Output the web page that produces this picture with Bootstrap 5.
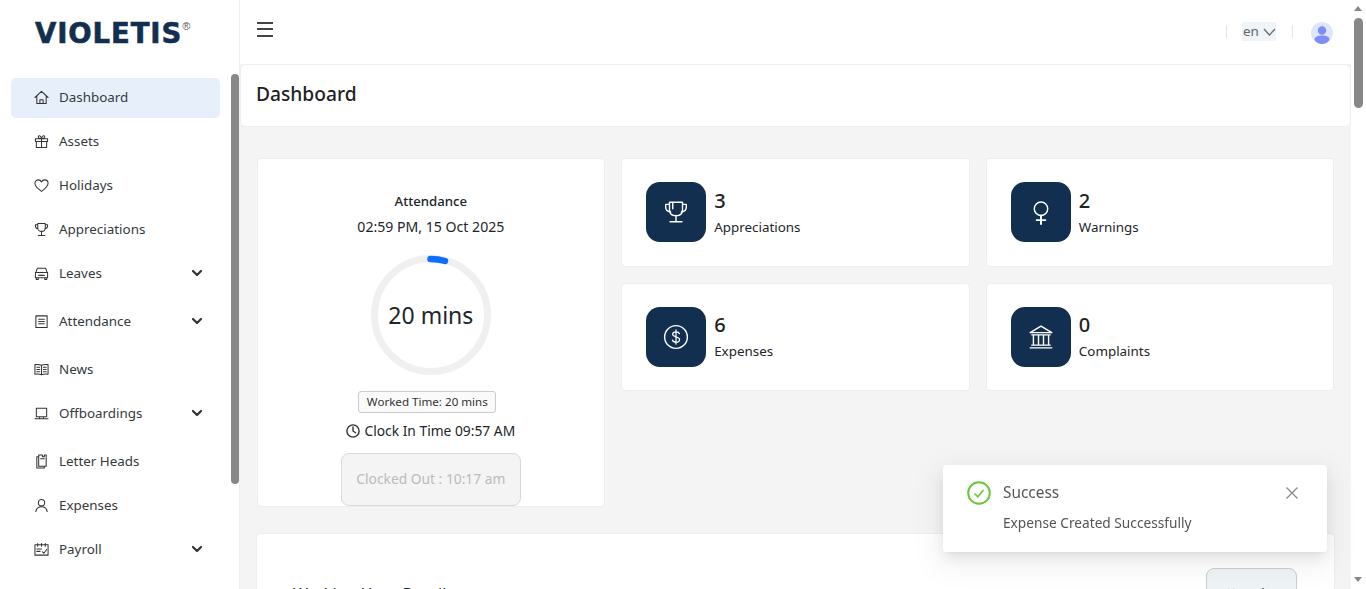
<!DOCTYPE html>
<html lang="en">
<head>
    <meta charset="UTF-8">
    <meta name="viewport" content="width=device-width, initial-scale=1.0">
    <title>Dashboard</title>
    <link href="https://cdn.jsdelivr.net/npm/bootstrap@5.3.0/dist/css/bootstrap.min.css" rel="stylesheet">
    <style>
        html, body {
            height: 100%;
            overflow: hidden;
        }

        body {
            font-family: "Noto Sans", "Open Sans", sans-serif;
            font-size: 13.4px;
            color: #212529;
            background: #fff;
        }

        .app-shell {
            height: 100vh;
        }

        /* sidebar */
        .side-col {
            width: 240px;
            flex: 0 0 240px;
            border-right: 1px solid #f0f0f0;
        }

        .brand-row {
            flex: none;
            height: 74px;
            padding: 18px 0 0 35px;
            white-space: nowrap;
        }

        .brand-name {
            font-family: "DejaVu Sans", sans-serif;
            font-weight: 700;
            font-size: 27.5px;
            line-height: 30px;
            color: #122f4f;
            letter-spacing: 0.9px;
            -webkit-text-stroke: 0.6px #122f4f;
        }

        .brand-reg {
            font-family: "Liberation Sans", sans-serif;
            font-size: 11px;
            color: #555;
            position: relative;
            top: -13px;
        }

        .side-scroll {
            min-height: 0;
        }

        .side-list {
            overflow: hidden;
            padding: 4px 11px 0;
        }

        .side-thumb {
            flex: none;
            width: 8px;
            height: 410px;
            background: #888;
            border-radius: 4px;
        }

        .side-item {
            height: 40px;
            margin-bottom: 4px;
            padding: 0 17px 2px 23px;
            border-radius: 5px;
            color: #343a40;
        }

        .side-item.has-sub {
            margin-bottom: 8px;
        }

        .side-item.current {
            background: #e7f0fa;
        }

        .side-icon {
            width: 15px;
            height: 15px;
            margin-right: 10px;
            fill: none;
            stroke: #333;
            stroke-width: 1.1;
            stroke-linecap: round;
            stroke-linejoin: round;
            flex: none;
        }

        .side-caret {
            width: 12px;
            height: 12px;
            fill: none;
            stroke: #333;
            stroke-width: 2.2;
            stroke-linecap: round;
            stroke-linejoin: round;
        }

        /* main column */
        .main-col {
            overflow: hidden;
            background: #f4f4f4;
            min-width: 0;
        }

        /* page scrollbar, headless browser hides the real one */
        .page-bar {
            flex: 0 0 15px;
            width: 15px;
            background: #fff;
            padding: 6px 3px 7px;
        }

        .page-thumb {
            height: 90px;
            margin-top: 7px;
            background: #888;
            border-radius: 5px;
        }

        .arrow-up, .arrow-down {
            width: 0;
            border-left: 4.5px solid transparent;
            border-right: 4.5px solid transparent;
        }

        .arrow-up {
            border-bottom: 5px solid #888;
        }

        .arrow-down {
            border-top: 5px solid #888;
        }

        .top-strip {
            height: 64px;
            background: #fff;
            padding: 0 18px 6px 17px;
        }

        .burger {
            width: 16px;
            height: 15px;
            border-top: 2px solid #444;
            border-bottom: 2px solid #444;
            position: relative;
        }

        .burger::after {
            content: "";
            position: absolute;
            left: 0;
            right: 0;
            top: 4.5px;
            border-top: 2px solid #444;
        }

        .strip-tools {
            margin-top: 5px;
        }

        .strip-sep {
            width: 1px;
            height: 13px;
            background: #e4e4e4;
        }

        .lang-pick {
            background: #eef4f7;
            height: 19px;
            width: 34px;
            margin: 0 16px 0 15px;
            padding-left: 1px;
            color: #666;
            line-height: 19px;
        }

        .avatar-round {
            width: 22px;
            height: 22px;
            margin: 3px 0 0 18px;
        }

        .page-head {
            height: 63px;
            background: #fff;
            border: 1px solid #eee;
            border-radius: 6px;
            padding: 0 0 2px 15px;
            font-size: 19.2px;
            font-weight: 500;
            color: #222;
        }

        .page-body {
            padding: 31px 16.5px 40px 16.5px;
        }

        .panel-box {
            background: #fff;
            border: 1px solid #eeeeee;
            border-radius: 4px;
        }

        .attend-box {
            height: 348.5px;
            padding-top: 32px;
            text-align: center;
        }

        .attend-title {
            font-size: 13.2px;
            font-weight: 500;
            line-height: 20px;
            margin-bottom: 6px;
        }

        .attend-date {
            font-size: 14.1px;
            line-height: 20px;
        }

        .ring-wrap {
            width: 120px;
            height: 120px;
            margin: 18px auto 16px;
        }

        .ring-label {
            font-size: 23px;
            white-space: nowrap;
        }

        .worked-tag {
            display: inline-block;
            border: 1px solid #ccc;
            border-radius: 3px;
            background: #fafafa;
            font-size: 11.6px;
            line-height: 20px;
            padding: 0 7.5px;
            margin-right: 7px;
            color: #333;
        }

        .clock-line {
            font-size: 13.8px;
            line-height: 20px;
            margin: 8px 0 12px;
        }

        .clocked-btn {
            display: block;
            width: 180px;
            height: 53px;
            margin: 0 auto;
            background: #f4f4f4;
            border: 1px solid #d9d9d9;
            border-radius: 8px;
            color: #bbb;
            font-size: 13.8px;
            font-family: inherit;
        }

        .stat-box {
            height: 108.5px;
            padding: 0 24px;
        }

        .stat-tile {
            width: 60px;
            height: 60px;
            border-radius: 14px;
            background: #122f4f;
            flex: none;
            margin-right: 8px;
        }

        .stat-tile svg {
            width: 26px;
            height: 26px;
            fill: none;
            stroke: #fff;
            stroke-width: 1.3;
            stroke-linecap: round;
            stroke-linejoin: round;
        }

        .stat-text {
            padding-top: 3px;
        }

        .stat-num {
            font-size: 20px;
            font-weight: 500;
            line-height: 24px;
            margin-bottom: 2px;
            color: #222;
        }

        .stat-label {
            line-height: 24px;
        }

        .hours-box {
            margin: 26px -0.5px 0 -0.5px;
            height: 3000px;
            padding: 34px 37px 34px 36px;
        }

        .hours-title {
            font-size: 16px;
            line-height: 24px;
            margin-top: 14px;
        }

        .range-btn {
            width: 91px;
            height: 52px;
            background: #eef3f6;
            border: 1px solid #ccc;
            border-radius: 8px;
            color: #333;
            font-family: inherit;
            font-size: 13.4px;
        }

        /* toast */
        .toast-note {
            position: fixed;
            left: 943px;
            top: 465px;
            width: 384px;
            height: 87px;
            background: rgba(255, 255, 255, 0.95);
            border-radius: 4px;
            box-shadow: 0 6px 16px rgba(0, 0, 0, 0.08), 0 3px 6px -4px rgba(0, 0, 0, 0.12), 0 9px 28px 8px rgba(0, 0, 0, 0.05);
            padding: 16px 29px 16px 24px;
            z-index: 20;
            color: #555;
        }

        .toast-title {
            font-size: 15.4px;
            line-height: 24px;
        }

        .toast-text {
            font-size: 13.7px;
            line-height: 22px;
            margin: 7px 0 0 36px;
        }
    </style>
</head>

<body>
    <div class="app-shell d-flex">
        <!-- sidebar -->
        <aside class="side-col d-flex flex-column">
            <div class="brand-row"><span class="brand-name">VIOLETIS</span><span class="brand-reg">®</span></div>
            <div class="side-scroll d-flex flex-grow-1">
                <div class="side-list flex-grow-1">
                    <div class="side-item current d-flex align-items-center">
                        <svg class="side-icon" viewBox="0 0 16 16"><path d="M1 8 8 1.5 15 8M3 6.5V14.5H13V6.5M6.3 14.5V10.5H9.7V14.5"/></svg>Dashboard
                    </div>
                    <div class="side-item d-flex align-items-center">
                        <svg class="side-icon" viewBox="0 0 16 16"><path d="M1.5 5H14.5V8H1.5ZM2.5 8V14.5H13.5V8M8 5V14.5M8 5C6 5 4.2 4.3 4.6 2.6 5.2.8 7.6 2 8 5 8.4 2 10.8.8 11.4 2.6 11.8 4.3 10 5 8 5Z"/></svg>Assets
                    </div>
                    <div class="side-item d-flex align-items-center">
                        <svg class="side-icon" viewBox="0 0 16 16"><path d="M8 14.3C3 10.8 1 8.3 1 5.7 1 3.4 2.8 2 4.6 2 6 2 7.3 2.8 8 4.2 8.7 2.8 10 2 11.4 2 13.2 2 15 3.4 15 5.7 15 8.3 13 10.8 8 14.3Z"/></svg>Holidays
                    </div>
                    <div class="side-item d-flex align-items-center">
                        <svg class="side-icon" viewBox="0 0 16 16"><path d="M4 1.5H12V6C12 8.4 10.2 10 8 10S4 8.4 4 6ZM4 3H1.5V4.5C1.5 6 2.8 7 4.4 7.4M12 3H14.5V4.5C14.5 6 13.2 7 11.6 7.4M8 10V14M4.5 14.5H11.5"/></svg>Appreciations
                    </div>
                    <div class="side-item has-sub d-flex align-items-center">
                        <svg class="side-icon" viewBox="0 0 16 16"><path d="M3.5 2.5H12.5L14 7H2ZM1.5 7H14.5V12.5H1.5ZM2.5 12.5V14.5H4.5V12.5M11.5 12.5V14.5H13.5V12.5M5 10H11"/></svg>Leaves
                        <svg class="side-caret ms-auto" viewBox="0 0 12 12"><path d="M2 4 6 8 10 4"/></svg>
                    </div>
                    <div class="side-item has-sub d-flex align-items-center">
                        <svg class="side-icon" viewBox="0 0 16 16"><path d="M2 2H14V14.5H2ZM5 5.5H11M5 8H11M5 10.5H11"/></svg>Attendance
                        <svg class="side-caret ms-auto" viewBox="0 0 12 12"><path d="M2 4 6 8 10 4"/></svg>
                    </div>
                    <div class="side-item d-flex align-items-center">
                        <svg class="side-icon" viewBox="0 0 16 16"><path d="M8 3.5C6 2.6 3.5 2.5 1 2.8V13C3.5 12.7 6 12.8 8 13.7 10 12.8 12.5 12.7 15 13V2.8C12.5 2.5 10 2.6 8 3.5ZM8 3.5V13.7M3 5.5H6M3 8H6M3 10.5H6M10 5.5H13M10 8H13M10 10.5H13"/></svg>News
                    </div>
                    <div class="side-item has-sub d-flex align-items-center">
                        <svg class="side-icon" viewBox="0 0 16 16"><path d="M2.5 2.5H13.5V11.5H2.5ZM1 13.5H15M6 11.5V13.5M10 11.5V13.5"/></svg>Offboardings
                        <svg class="side-caret ms-auto" viewBox="0 0 12 12"><path d="M2 4 6 8 10 4"/></svg>
                    </div>
                    <div class="side-item d-flex align-items-center">
                        <svg class="side-icon" viewBox="0 0 16 16"><path d="M5 3H3V15H11V13M5 1H9V3H11V1H13V13H5ZM7 5H11"/></svg>Letter Heads
                    </div>
                    <div class="side-item d-flex align-items-center">
                        <svg class="side-icon" viewBox="0 0 16 16"><circle cx="8" cy="5" r="3.4"/><path d="M2 14.5C2.4 11 4.8 9.3 8 9.3S13.6 11 14 14.5"/></svg>Expenses
                    </div>
                    <div class="side-item has-sub d-flex align-items-center">
                        <svg class="side-icon" viewBox="0 0 16 16"><path d="M1 3H15V14H1ZM4 1.5V4.5M8 1.5V4.5M12 1.5V4.5M3 7.5H8M3 10H6.5M9 10.5 10.5 12 13.5 8"/></svg>Payroll
                        <svg class="side-caret ms-auto" viewBox="0 0 12 12"><path d="M2 4 6 8 10 4"/></svg>
                    </div>
                </div>
                <div class="side-thumb"></div>
            </div>
        </aside>

        <!-- main -->
        <main class="main-col flex-grow-1">
            <div class="top-strip d-flex align-items-center justify-content-between">
                <div class="burger"></div>
                <div class="strip-tools d-flex align-items-center">
                    <div class="strip-sep"></div>
                    <div class="lang-pick d-flex align-items-center">en
                        <svg class="ms-1" width="13" height="8" viewBox="0 0 13 8" fill="none" stroke="#666" stroke-width="1.2"><path d="M1 1 6.5 7 12 1"/></svg>
                    </div>
                    <div class="strip-sep"></div>
                    <svg class="avatar-round" viewBox="0 0 22 22"><circle cx="11" cy="11" r="11" fill="#dfe5fd"/><circle cx="11" cy="8.5" r="4.2" fill="#7d8ff6"/><path d="M3.5 18C3.5 14.5 7 13.5 11 13.5S18.5 14.5 18.5 18C16.5 20.5 14 22 11 22S5.5 20.5 3.5 18Z" fill="#7d8ff6"/></svg>
                </div>
            </div>

            <div class="page-head d-flex align-items-center">Dashboard</div>

            <div class="page-body">
                <div class="row g-3">
                    <div class="col-4">
                        <div class="panel-box attend-box">
                            <div class="attend-title">Attendance</div>
                            <div class="attend-date">02:59 PM, 15 Oct 2025</div>
                            <div class="ring-wrap position-relative">
                                <svg width="120" height="120" viewBox="0 0 120 120" fill="none">
                                    <circle cx="60" cy="60" r="56.5" stroke="#f0f0f0" stroke-width="7"/>
                                    <path d="M59.5 4C63 4 69 4.5 74 6" stroke="#0d6efd" stroke-width="6.5" stroke-linecap="round"/>
                                </svg>
                                <span class="ring-label position-absolute top-50 start-50 translate-middle">20 mins</span>
                            </div>
                            <div><span class="worked-tag">Worked Time: 20 mins</span></div>
                            <div class="clock-line d-flex align-items-center justify-content-center">
                                <svg class="me-1" width="14" height="14" viewBox="0 0 16 16" fill="none" stroke="#333" stroke-width="1.6" stroke-linecap="round"><circle cx="8" cy="8" r="7"/><path d="M8 3.5V8L11 10"/></svg>Clock In Time 09:57 AM
                            </div>
                            <button class="clocked-btn" type="button" disabled>Clocked Out : 10:17 am</button>
                        </div>
                    </div>
                    <div class="col-8">
                        <div class="row g-3">
                            <div class="col-6">
                                <div class="panel-box stat-box d-flex align-items-center">
                                    <div class="stat-tile d-flex align-items-center justify-content-center">
                                        <svg viewBox="0 0 24 24"><path d="M6 3H18V10C18 13.5 15.5 15.5 12 15.5S6 13.5 6 10ZM6 5H2.5V7.5C2.5 10 4.5 11.5 7 12M18 5H21.5V7.5C21.5 10 19.5 11.5 17 12M9 4V9M12 15.5V21M6.5 21H17.5"/></svg>
                                    </div>
                                    <div class="stat-text">
                                        <div class="stat-num">3</div>
                                        <div class="stat-label">Appreciations</div>
                                    </div>
                                </div>
                            </div>
                            <div class="col-6">
                                <div class="panel-box stat-box d-flex align-items-center">
                                    <div class="stat-tile d-flex align-items-center justify-content-center">
                                        <svg viewBox="0 0 24 24"><circle cx="12" cy="9" r="6.2"/><path d="M12 15.2V23M8 19.5H16" stroke-width="1.8"/></svg>
                                    </div>
                                    <div class="stat-text">
                                        <div class="stat-num">2</div>
                                        <div class="stat-label">Warnings</div>
                                    </div>
                                </div>
                            </div>
                            <div class="col-6">
                                <div class="panel-box stat-box d-flex align-items-center">
                                    <div class="stat-tile d-flex align-items-center justify-content-center">
                                        <svg viewBox="0 0 24 24"><circle cx="12" cy="12" r="10.5"/><path d="M15.2 9C14.8 7.8 13.5 7.2 12 7.2 10.2 7.2 8.9 8.1 8.9 9.5 8.9 12.5 15.3 11.3 15.3 14.5 15.3 16 13.9 16.8 12 16.8 10.4 16.8 9.1 16.1 8.7 14.8M12 5.5V18.5" stroke-width="1.1"/></svg>
                                    </div>
                                    <div class="stat-text">
                                        <div class="stat-num">6</div>
                                        <div class="stat-label">Expenses</div>
                                    </div>
                                </div>
                            </div>
                            <div class="col-6">
                                <div class="panel-box stat-box d-flex align-items-center">
                                    <div class="stat-tile d-flex align-items-center justify-content-center">
                                        <svg viewBox="0 0 24 24"><path d="M12 2 22 8H2ZM3.5 10H20.5M5 10V19M9.7 10V19M14.3 10V19M19 10V19M3.5 19.5H20.5M2 22H22"/></svg>
                                    </div>
                                    <div class="stat-text">
                                        <div class="stat-num">0</div>
                                        <div class="stat-label">Complaints</div>
                                    </div>
                                </div>
                            </div>
                        </div>
                    </div>
                </div>

                <div class="panel-box hours-box">
                    <div class="d-flex justify-content-between align-items-start">
                        <div class="hours-title">Working Hour Details</div>
                        <button class="range-btn" type="button">
                            <svg class="me-1" width="14" height="14" viewBox="0 0 16 16" fill="none" stroke="#333" stroke-width="1.1"><path d="M1.5 3H14.5V14.5H1.5ZM1.5 6.5H14.5M5 1V4.5M11 1V4.5"/></svg>Today
                        </button>
                    </div>
                </div>
            </div>
        </main>

        <div class="page-bar d-flex flex-column">
            <div class="arrow-up"></div>
            <div class="page-thumb"></div>
            <div class="arrow-down mt-auto"></div>
        </div>
    </div>

    <!-- toast -->
    <div class="toast-note">
        <div class="d-flex align-items-center">
            <svg class="me-2" width="24" height="24" viewBox="0 0 24 24" fill="none" stroke="#67c73a"><circle cx="12" cy="12" r="10.8" stroke-width="2"/><path d="M7.5 12.5 10.8 15.8 16.5 9" stroke-width="1.6"/></svg>
            <div class="toast-title ms-1">Success</div>
            <svg class="ms-auto" width="12" height="12" viewBox="0 0 12 12" stroke="#888" stroke-width="1.2"><path d="M.5.5 11.5 11.5M11.5.5.5 11.5"/></svg>
        </div>
        <div class="toast-text">Expense Created Successfully</div>
    </div>

    <script src="https://cdn.jsdelivr.net/npm/bootstrap@5.3.0/dist/js/bootstrap.bundle.min.js"></script>
</body>

</html>
